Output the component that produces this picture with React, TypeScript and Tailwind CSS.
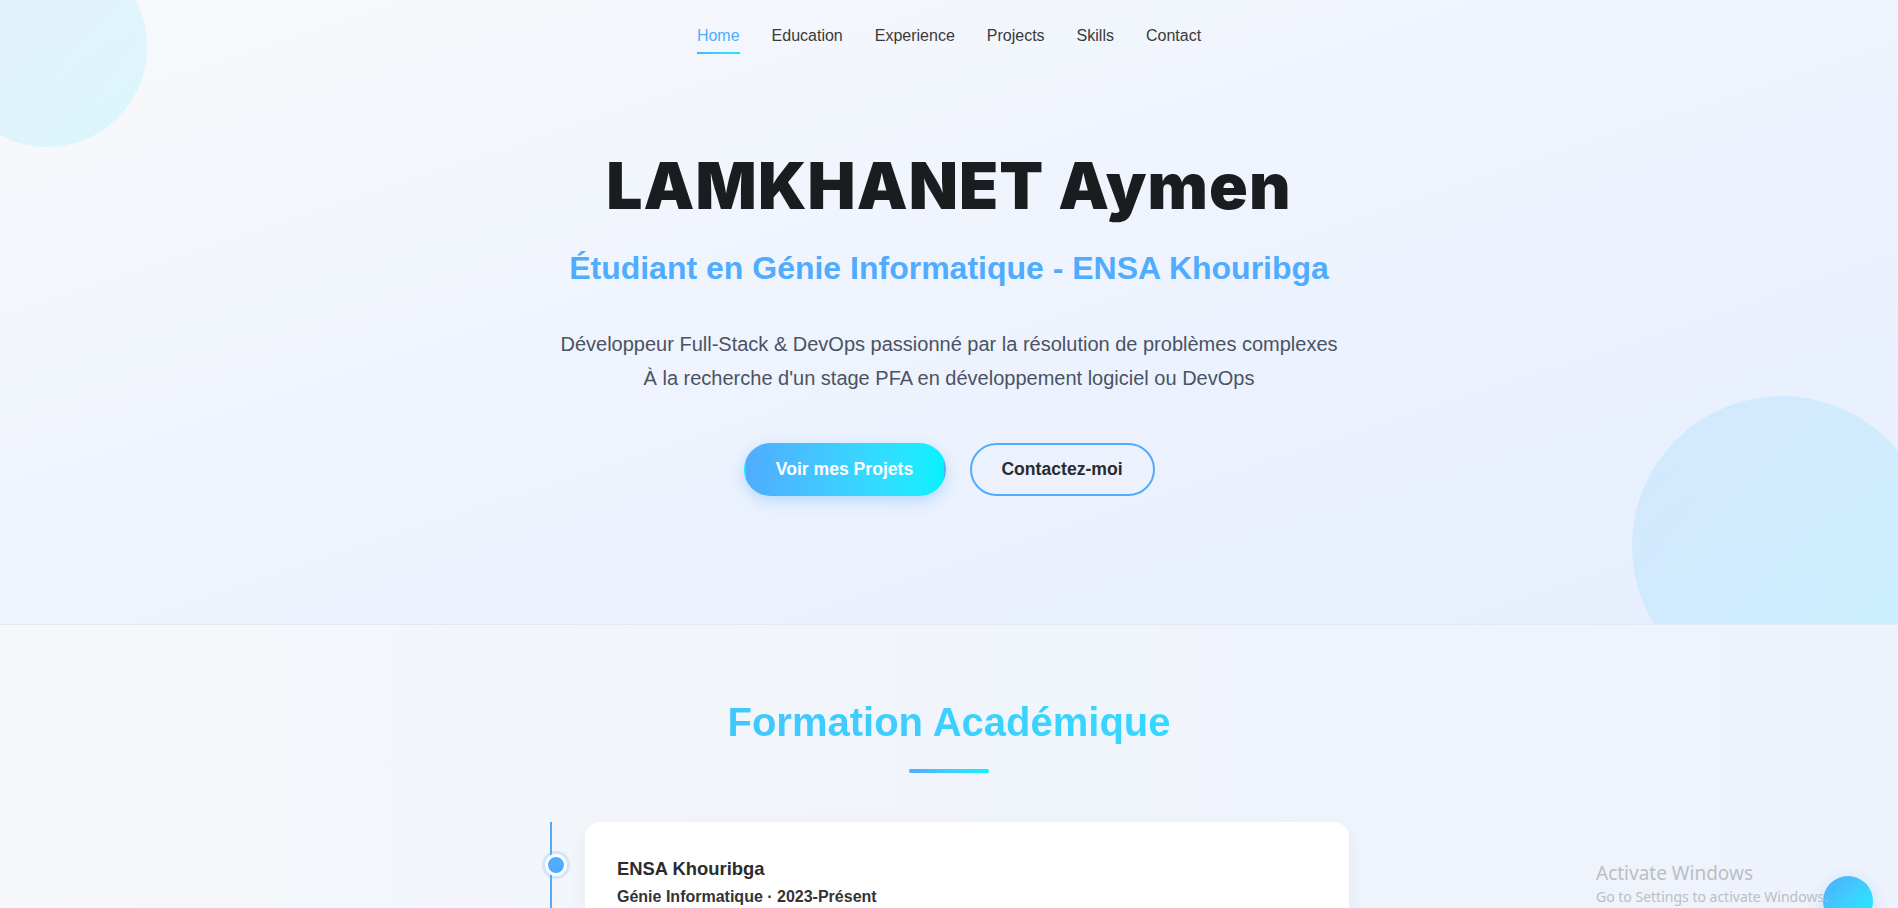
import React from "react";

const navLinks = ["Home", "Education", "Experience", "Projects", "Skills", "Contact"];

const NavBar = () => {
  return (
    <nav className="relative z-10 flex justify-center items-start gap-8 pt-[27px] text-[16px] leading-[18px]">
      {navLinks.map((label) => {
        const active = label === "Home";
        return (
          <a key={label} href={"#" + label.toLowerCase()} className="flex flex-col items-stretch">
            <span className={active ? "text-[#4facfe]" : "text-[#3a3a3a]"}>{label}</span>
            {active && <span className="mt-[7px] h-[2px] bg-linear-to-r from-[#4facfe] to-[#00f2fe]" />}
          </a>
        );
      })}
    </nav>
  );
};

const Hero = () => {
  return (
    <section className="relative h-[625px] overflow-hidden border-b border-[#e4e9f0] bg-linear-to-br from-[#f8f9fb] via-[#eef3fd] to-[#e6effe]">
      {/* floating circles */}
      <div className="absolute left-[-53px] top-[-53px] w-[200px] h-[200px] rounded-full bg-linear-to-br from-[#4facfe] to-[#00f2fe] opacity-[0.12]" />
      <div className="absolute left-[1632px] top-[396px] w-[300px] h-[300px] rounded-full bg-linear-to-br from-[#4facfe] to-[#00f2fe] opacity-[0.14]" />

      <NavBar />

      <div className="relative flex flex-col items-center text-center pt-[93px]">
        <h1 className="font-['Inter','Liberation_Sans',sans-serif] text-[64px] leading-[77px] font-black tracking-[1.1px] text-[#1b1c20]">
          LAMKHANET Aymen
        </h1>
        <h2 className="mt-[26px] text-[32px] leading-[37px] font-bold text-[#4facfe]">
          Étudiant en Génie Informatique - ENSA Khouribga
        </h2>
        <p className="mt-[40px] text-[20px] leading-[34px] text-[#4a5263]">
          Développeur Full-Stack &amp; DevOps passionné par la résolution de problèmes complexes
          <br />
          À la recherche d'un stage PFA en développement logiciel ou DevOps
        </p>
        <div className="mt-[48px] flex gap-6">
          <button className="h-[53px] w-[202px] rounded-full border-2 border-transparent bg-linear-to-r from-[#4facfe] to-[#00f2fe] text-[17.6px] font-bold text-white shadow-[0_5px_15px_rgba(79,172,254,0.35)]">
            Voir mes Projets
          </button>
          <button className="h-[53px] w-[185px] rounded-full border-2 border-[#4facfe] bg-transparent text-[17.6px] font-bold text-[#2a2b2f]">
            Contactez-moi
          </button>
        </div>
      </div>
    </section>
  );
};

const education = [
  {
    school: "ENSA Khouribga",
    detail: "Génie Informatique · 2023-Présent",
    text: "Cycle ingénieur en Génie Informatique : développement logiciel, systèmes distribués, bases de données et DevOps.",
  },
];

const Formation = () => {
  return (
    <section className="min-h-[700px] bg-linear-to-r from-[#f5f7fa] to-[#edf2fc] pt-[74px]">
      <h2 className="text-center text-[40px] leading-[46px] font-bold bg-linear-to-r from-[#4facfe] to-[#00f2fe] bg-clip-text text-transparent">
        Formation Académique
      </h2>
      <div className="mx-auto mt-[24px] h-[4px] w-[80px] rounded-full bg-linear-to-r from-[#4facfe] to-[#00f2fe]" />

      <div className="relative mx-auto mt-[49px] w-[800px]">
        <div className="absolute left-[1px] top-0 bottom-0 w-[2px] bg-[#4facfe]" />
        {education.map((e) => (
          <div key={e.school} className="relative pl-[36px] pb-8">
            <span className="absolute left-[-4px] top-[32px] w-[22px] h-[22px] rounded-full bg-[#4facfe] border-[3px] border-white shadow-[0_0_0_3px_rgba(79,172,254,0.2)]" />
            <div className="rounded-[15px] bg-white px-8 pt-[35px] pb-8 shadow-[0_5px_20px_rgba(0,0,0,0.05)]">
              <h3 className="text-[18.4px] leading-[24px] font-bold text-[#2c2c2e]">{e.school}</h3>
              <p className="mt-[6px] text-[16px] leading-[20px] font-bold text-[#333338]">{e.detail}</p>
              <p className="mt-4 text-[16px] leading-[26px] text-[#555]">{e.text}</p>
            </div>
          </div>
        ))}
      </div>
    </section>
  );
};

export default function App() {
  return (
    <div className="relative h-[908px] overflow-hidden font-['Liberation_Sans',Arial,sans-serif]">
      <Hero />
      <Formation />

      {/* scroll to top */}
      <button className="absolute left-[1823px] top-[876px] w-[50px] h-[50px] rounded-full bg-linear-to-br from-[#4facfe] to-[#00f2fe] shadow-[0_5px_15px_rgba(79,172,254,0.3)]" />

      {/* OS watermark */}
      <div className="pointer-events-none absolute left-[1596px] top-[862px] z-20 font-['Noto_Sans','Open_Sans',sans-serif] text-[#bcbec2]">
        <div className="text-[19px] leading-[23px]">Activate Windows</div>
        <div className="mt-[3px] text-[14px] leading-[18px]">Go to Settings to activate Windows.</div>
      </div>
    </div>
  );
}
